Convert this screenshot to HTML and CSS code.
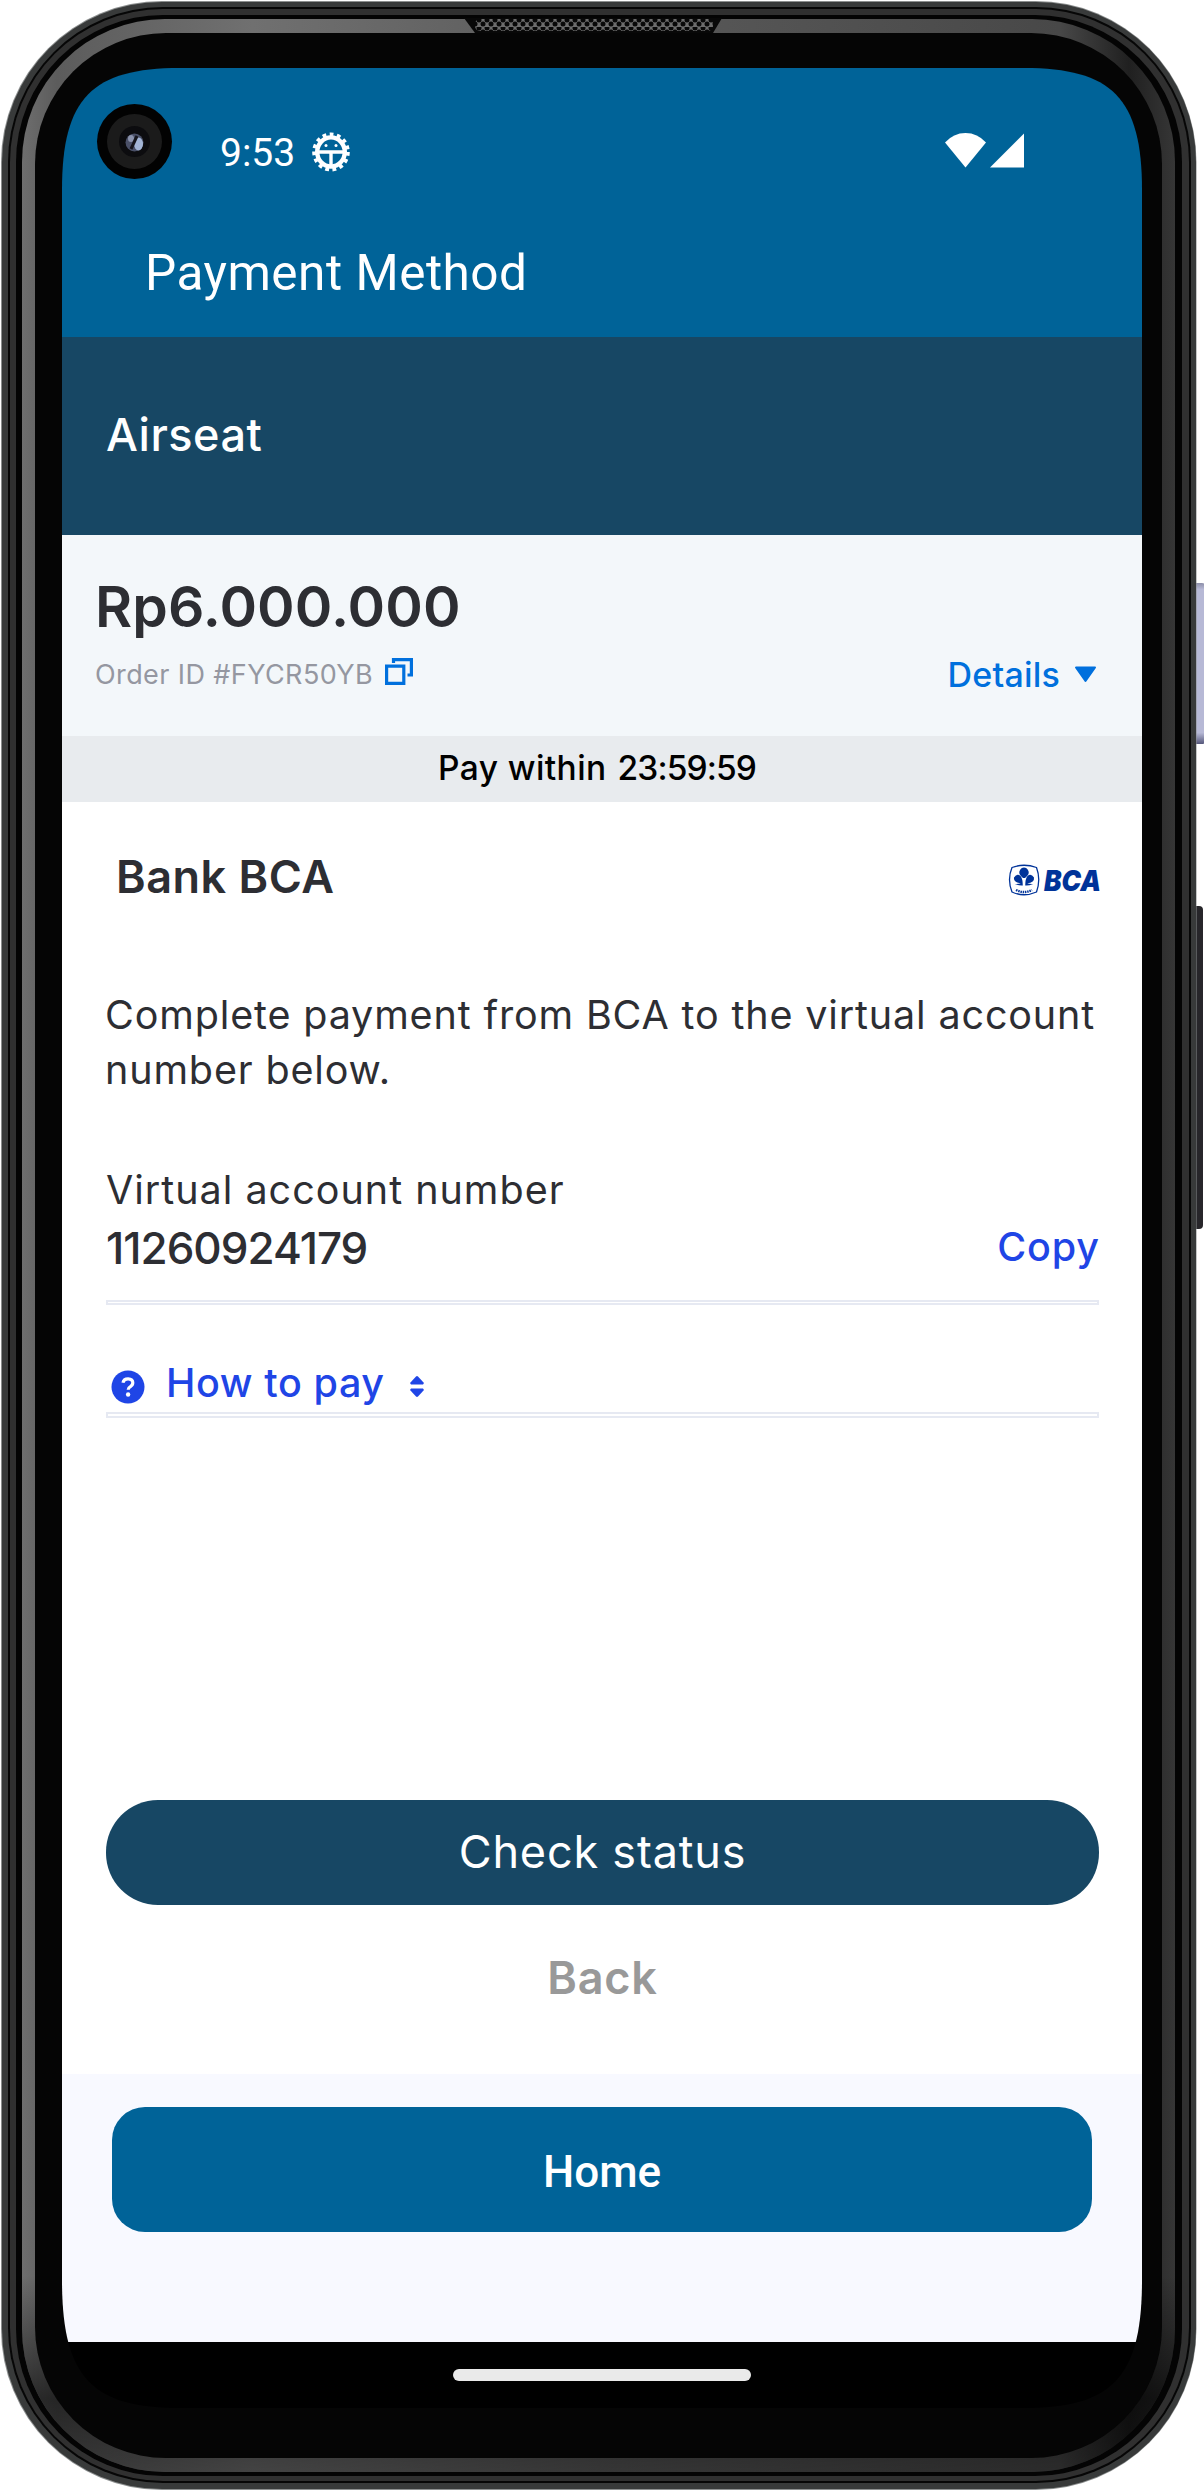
FILE: index.html
```
<!DOCTYPE html>
<html lang="en">
<head>
<meta charset="utf-8">
<title>Payment Method</title>
<link rel="stylesheet" href="styles.css">
</head>
<body>
<div class="phone">
  <main class="screen">
    <header class="app-header">
      <div class="status-bar">
        <div class="status-left">
          <span class="clock">9:53</span>
          <svg class="gear" viewBox="0 0 38 40" fill="none" stroke="#fff">
            <ellipse cx="19" cy="20" rx="13.800" ry="14.600" stroke-width="4.400"/>
            <ellipse cx="19" cy="20" rx="16.600" ry="17.300" stroke-width="4.400" stroke-dasharray="3.700 3.400"/>
            <path d="M6 20h26M19 20v16" stroke-width="3.400"/>
            <circle cx="14" cy="13.500" r="1.500" fill="#fff" stroke="none"/>
            <circle cx="24" cy="13.500" r="1.500" fill="#fff" stroke="none"/>
          </svg>
        </div>
        <svg class="signal" viewBox="0 0 80 35" fill="#fff">
          <path d="M0 9.500Q8.500 0 20.500 0T41 9.500L20.500 34.500Z"/>
          <path d="M45 34.500L79 .5V34.500Z"/>
        </svg>
      </div>
      <h1 class="page-title">Payment Method</h1>
    </header>

    <section class="merchant">Airseat</section>

    <section class="order">
      <div class="amount">Rp6.000.000</div>
      <div class="order-row">
        <div class="order-id">
          <span>Order ID #FYCR50YB</span>
          <svg class="copy-icon" viewBox="0 0 28 27" fill="none" stroke="#0070dd" stroke-width="3.200">
            <path d="M1.600 8.100h17.200v17.300H1.600z"/>
            <path d="M8.500 5V1.600H26.400V17H22.500"/>
          </svg>
        </div>
        <div class="details">
          <span>Details</span>
          <svg class="caret" viewBox="0 0 23 17"><path d="M2 1.500h19L11.500 15z" fill="#0070dd" stroke="#0070dd" stroke-width="2" stroke-linejoin="round"/></svg>
        </div>
      </div>
    </section>

    <section class="deadline"><span>Pay within</span><span class="timer">23:59:59</span></section>

    <section class="payment">
      <div class="bank-row">
        <h2 class="bank-name">Bank BCA</h2>
        <svg class="bca" viewBox="0 0 94 32" fill="#003399">
          <path d="M4 3.500Q16 -1 28.500 3.500Q33 15.500 28.500 28Q16 33.500 4 28Q-1 15.500 4 3.500Z" fill="none" stroke="#003399" stroke-width="1.300"/>
          <path d="M16 3.500a5 5 0 0 1 4.500 6.500q-1 2-3.500 4h-2q-2.500-2-3.500-4A5 5 0 0 1 16 3.500z"/>
          <path d="M6 13.500q3-4.500 6.500-1.500 2.200 2.500 2.300 9.500-3 .5-8-1.500 4 .2 6-.8-7.500-.5-6.800-5.700z"/>
          <path d="M26 13.500q-3-4.500-6.500-1.500-2.200 2.500-2.300 9.500 3 .5 8-1.500-4 .2-6-.8 7.500-.5 6.800-5.700z"/>
          <path d="M8 26q8 4 16 0" fill="none" stroke="#003399" stroke-width="2.400" stroke-dasharray="1.500 .8"/>
          <text class="bca-word" x="36" y="26.500" textLength="57" lengthAdjust="spacingAndGlyphs">BCA</text>
        </svg>
      </div>

      <p class="instructions">Complete payment from BCA to the virtual account number below.</p>

      <div class="va-label">Virtual account number</div>
      <div class="va-row">
        <span class="va-number">11260924179</span>
        <span class="copy">Copy</span>
      </div>
      <div class="rule"></div>

      <div class="howto">
        <svg class="help" viewBox="0 0 34 34">
          <circle cx="17" cy="17" r="16.500" fill="#1f45e6"/>
          <path d="M12 12.800q.6-4 5.100-4 4.700.1 4.700 4 0 2.300-2.400 3.800-2.200 1.300-2.200 3.100" fill="none" stroke="#fff" stroke-width="3.200"/>
          <circle cx="17.100" cy="24.500" r="2.200" fill="#fff"/>
        </svg>
        <span class="howto-text">How to pay</span>
        <svg class="sort" viewBox="0 0 14 21" fill="#1f45e6">
          <path d="M1 8.500L0 7 6 .500q1-.8 2 0L14 7l-1 1.500z"/>
          <path d="M1 12.500L0 14l6 6.500q1 .8 2 0L14 14l-1-1.500z"/>
        </svg>
      </div>
      <div class="rule rule-low"></div>

      <button class="check" type="button">Check status</button>
      <button class="back" type="button">Back</button>
    </section>

    <footer class="bottom"><button class="home" type="button">Home</button></footer>
    <nav class="nav-bar"><span class="pill"></span></nav>
  </main>

  <svg class="frame" viewBox="0 0 1204 2491" fill-rule="evenodd">
    <defs>
      <linearGradient id="rim">
        <stop offset="0" stop-color="#6e6e6e"/><stop offset=".03" stop-color="#5c5c5c"/>
        <stop offset=".2" stop-color="#707070"/><stop offset=".5" stop-color="#5a5a5a"/>
        <stop offset=".9" stop-color="#484848"/><stop offset=".96" stop-color="#202020"/>
        <stop offset="1" stop-color="#363636"/>
      </linearGradient>
      <linearGradient id="shade" x2="0" y2="1">
        <stop offset="0" stop-opacity="0"/><stop offset=".92" stop-opacity="0"/>
        <stop offset=".97" stop-opacity=".6"/><stop offset="1" stop-opacity=".4"/>
      </linearGradient>
      <linearGradient id="lilac" x2="0" y2="1">
        <stop offset="0" stop-color="#8d8fa9"/><stop offset=".04" stop-color="#b7b9d6"/>
        <stop offset=".93" stop-color="#b7b9d6"/><stop offset="1" stop-color="#55577a"/>
      </linearGradient>
      <pattern id="mesh" width="8" height="8" patternUnits="userSpaceOnUse" x="475" y="19">
        <rect width="8" height="8" fill="#6c6c6c"/>
        <circle cx="4" cy="1" r="2.500" fill="#080808"/><circle cx="0" cy="5" r="2.500" fill="#080808"/><circle cx="8" cy="5" r="2.500" fill="#080808"/>
      </pattern>
      <path id="hole" d="M62 190C62 98 92 68 180 68H1024C1112 68 1142 98 1142 190V2280C1142 2378 1112 2408 1024 2408H180C92 2408 62 2378 62 2280Z"/>
      <mask id="glass"><rect width="1204" height="2491" fill="#fff"/><use href="#hole" fill="#000"/></mask>
    </defs>
    <rect x="1192" y="583" width="13" height="161" rx="3" fill="url(#lilac)"/>
    <rect x="1190" y="906" width="13" height="323" rx="4" fill="#27262a"/>
    <g mask="url(#glass)">
      <rect x="1" y="1" width="1195.500" height="2489" rx="161" fill="#8c8f8f"/>
      <rect x="2" y="2" width="1194" height="2487" rx="160" fill="#383a3a"/>
      <rect x="8" y="7" width="1183" height="2476" rx="155" fill="#060606"/>
      <rect x="10" y="9" width="1179" height="2472" rx="153" fill="#303030"/>
      <rect x="16" y="15" width="1166" height="2461" rx="147" fill="#040404"/>
      <rect x="22" y="19" width="1153" height="2453" rx="143" fill="url(#rim)"/>
      <rect x="22" y="19" width="1153" height="2453" rx="143" fill="url(#shade)"/>
      <rect x="35" y="33" width="1127" height="2425" rx="131" fill="#050505"/>
      <path d="M464 18h258l-9 15H475z" fill="#080808"/>
      <rect x="475" y="19" width="238" height="12" rx="5" fill="url(#mesh)"/>
    </g>
    <circle cx="134.500" cy="141.500" r="37.500" fill="#020202"/>
    <circle cx="134.500" cy="141.500" r="27.500" fill="#1b1b1b"/>
    <circle cx="134.500" cy="141.500" r="15.500" fill="#0c0c0f"/>
    <circle cx="134.500" cy="142.500" r="9" fill="#4a5068"/>
    <ellipse cx="138.500" cy="144" rx="4.500" ry="6.500" fill="#a3b5d6"/>
    <ellipse cx="131" cy="138.500" rx="3" ry="3.500" fill="#8b93ad"/>
    <path d="M131 149L137 136" stroke="#15151c" stroke-width="3"/>
  </svg>
</div>
</body>
</html>
```
FILE: styles.css
```
* { box-sizing: border-box; }

body { margin: 0; background: #fff; font-family: Inter, "Liberation Sans", sans-serif; }

h1, h2, p { margin: 0; }

button {
  display: flex;
  align-items: center;
  justify-content: center;
  width: 100%;
  padding: 0;
  border: 0;
  background: none;
  font-family: inherit;
}

svg { display: block; flex: none; }

.phone { position: relative; width: 1204px; height: 2491px; padding: 68px 62px 83px; overflow: hidden; }

.screen { display: flex; flex-direction: column; width: 1080px; height: 2340px; background: #fff; }

.frame { position: absolute; left: 0; top: 0; width: 1204px; height: 2491px; }

.app-header { height: 269px; background: #006398; color: #fff; font-family: Roboto, sans-serif; }

.status-bar { display: flex; align-items: center; justify-content: space-between; height: 169px; padding: 0 117px 0 158px; }
.status-left { display: flex; align-items: center; gap: 17px; }
.clock { font-size: 39px; line-height: 46px; }
.gear { width: 38px; height: 40px; margin-top: -2px; }
.signal { width: 80px; height: 35px; margin-top: -4px; }

.page-title { padding-left: 83px; font-size: 49.5px; font-weight: 400; line-height: 73px; letter-spacing: 0.5px; }

.merchant {
  display: flex;
  align-items: center;
  height: 198px;
  padding: 0 0 4px 44px;
  background: #174764;
  color: #fff;
  font-size: 45px;
  font-weight: 500;
  letter-spacing: 0.5px;
}

.order { height: 201px; padding: 41px 45px 0 33px; background: #f3f7fa; }
.amount { color: #2d2e33; font-size: 57px; font-weight: 600; line-height: 62px; letter-spacing: 0.1px; }
.order-row { display: flex; align-items: center; justify-content: space-between; height: 40px; margin-top: 16px; }
.order-id { display: flex; align-items: center; gap: 12px; color: #9597a1; font-size: 27px; letter-spacing: 0.4px; }
.copy-icon { width: 28px; height: 27px; margin-top: -5px; }
.details { display: flex; align-items: center; gap: 14px; color: #0070dd; font-size: 34px; font-weight: 500; letter-spacing: 0.2px; }
.caret { width: 23px; height: 17px; }

.deadline {
  display: flex;
  align-items: center;
  justify-content: center;
  gap: 11px;
  height: 66px;
  padding: 0 10px 2px 0;
  background: #e8ebee;
  color: #000;
  font-size: 33.5px;
  font-weight: 500;
  letter-spacing: 0.4px;
}
.timer { letter-spacing: -0.9px; }

.payment { height: 1272px; padding: 0 43px 0 44px; color: #2d2e33; }

.bank-row { display: flex; align-items: center; justify-content: space-between; height: 148px; padding-left: 10px; }
.bank-name { font-size: 45px; font-weight: 600; letter-spacing: 0.5px; }
.bca { width: 94px; height: 32px; margin-top: 8px; margin-right: -3px; overflow: visible; }
.bca-word { font: italic 900 29px Inter, sans-serif; }

.instructions { margin: 38px -10px 0 -1px; font-size: 39.5px; line-height: 55px; letter-spacing: 0.85px; }
.va-label { margin-top: 65px; font-size: 39.5px; line-height: 55px; letter-spacing: 1px; }
.va-row { display: flex; align-items: center; justify-content: space-between; height: 56px; margin-top: 2px; font-weight: 500; }
.va-number { font-size: 44px; letter-spacing: -1px; }
.copy { margin-right: -1px; padding-bottom: 3px; color: #1f45e6; font-size: 39.5px; letter-spacing: 0.9px; }

.rule { height: 5px; margin-top: 24px; border: 2px solid #e6e9f2; }
.rule-low { height: 6px; margin-top: 4px; }

.howto { display: flex; align-items: center; height: 50px; margin-top: 53px; padding-left: 5px; color: #1f45e6; font-size: 39.5px; font-weight: 500; }
.help { width: 34px; height: 34px; margin-top: 7px; }
.howto-text { margin-left: 21px; letter-spacing: 0.6px; }
.sort { width: 14px; height: 21px; margin-top: 7px; margin-left: 25px; }

.check { height: 105px; margin-top: 382px; padding-bottom: 3px; border-radius: 52px; background: #174764; color: #fff; font-size: 45px; letter-spacing: 0.8px; }
.back { height: 60px; margin-top: 42px; color: #999; font-size: 45px; font-weight: 600; letter-spacing: 0.8px; }

.bottom { height: 268px; padding: 33px 50px 0; background: #f8f9ff; }
.home { height: 125px; padding-top: 5px; border-radius: 33px; background: #006398; color: #fff; font: 500 44px Roboto, sans-serif; }

.nav-bar { display: flex; justify-content: center; height: 66px; padding-top: 27px; background: #000; }
.pill { width: 298px; height: 12px; border-radius: 6px; background: #eaeaea; }
```
